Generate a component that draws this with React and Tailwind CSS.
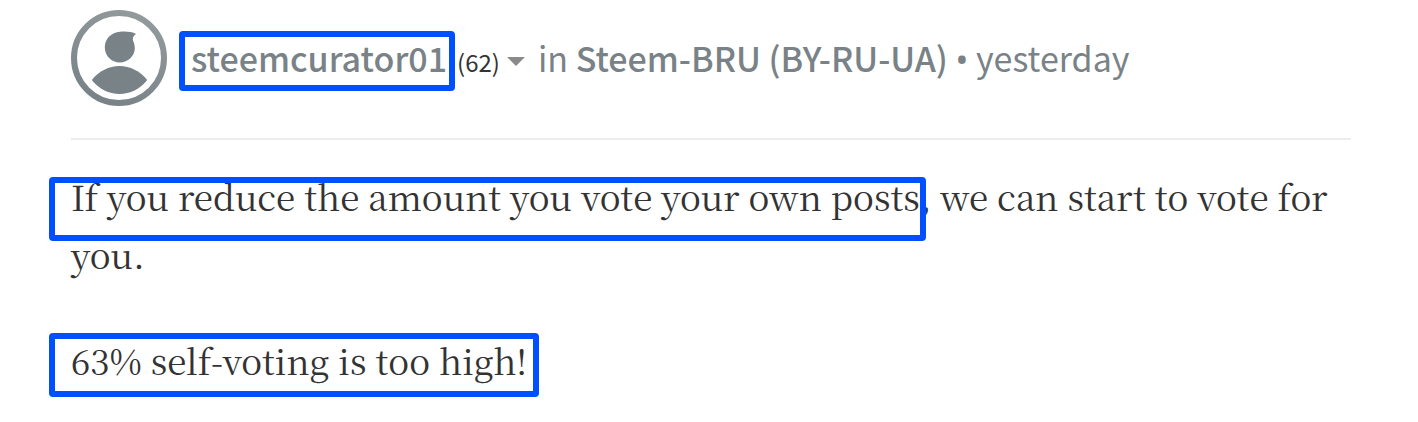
function Avatar() {
  return (
    <svg viewBox="0 0 96 96" className="size-24 shrink-0" role="img" aria-label="steemcurator01 avatar">
      <defs>
        <linearGradient id="ring" x1="0.7" y1="0" x2="0.3" y2="1">
          <stop offset="0" stopColor="#929a9c" />
          <stop offset="1" stopColor="#788287" />
        </linearGradient>
      </defs>
      <circle cx="48" cy="48" r="45" fill="none" stroke="url(#ring)" strokeWidth="6" />
      <path
        fill="#788287"
        d="M65 24 C61 21.600 54 21.300 49 21.800 C40.300 22.300 33.800 29 33.800 37.300 C33.800 46 40.500 52.500 48.800 52.500 C57 52.500 63.800 46 63.800 38 C63.800 35.500 63 33 62.200 31 C61.300 28.500 62 26 65 24 Z"
      />
      <path
        fill="#788287"
        d="M20.800 70 C28 61 38 56 48.500 56 C59 56 69 61 76.200 70 C69 79 59 84 48.500 84 C38 84 28 79 20.800 70 Z"
      />
    </svg>
  );
}

function Marked({ children, frame }) {
  return (
    <span className="relative inline-block">
      {children}
      <span aria-hidden="true" className={`pointer-events-none absolute rounded border-6 border-[#0050ff] ${frame}`} />
    </span>
  );
}

export default function App() {
  return (
    <article className="bg-white pt-[10px] pr-[67px] pb-6 pl-[71px]">
      <header className="flex items-center gap-6 border-b-2 border-[#ececec] pb-8 font-['Noto_Sans_CJK_SC',sans-serif] text-[34px] leading-[60px] text-[#788287]">
        <Avatar />
        <div className="flex items-baseline whitespace-nowrap">
          <a href="#author" className="font-medium">
            <Marked frame="-left-3 -right-2 top-[3px] -bottom-[3px]">steemcurator01</Marked>
          </a>
          <button type="button" className="ml-[10px] flex items-center gap-[7px] text-2xl text-[#333333]" aria-label="Author menu, reputation 62">
            (62)
            <svg viewBox="0 0 18 9" className="h-[9px] w-[18px]" aria-hidden="true">
              <path d="M0 0H18L9 9Z" fill="#8a8a8a" />
            </svg>
          </button>
          <span className="ml-[13px]">
            in <a href="#community" className="font-medium">Steem-BRU (BY-RU-UA)</a>{" "}
            <span className="font-['Noto_Sans',sans-serif]">•</span> <time>yesterday</time>
          </span>
        </div>
      </header>
      <div className="flex flex-col gap-12 pt-[27px] font-['Noto_Serif_CJK_SC','Liberation_Serif',serif] text-[35px] leading-[58px] text-[#333333]">
        <p>
          <Marked frame="-left-[22px] -right-[6px] top-[10px] -bottom-4">
            If you reduce the amount you vote your own posts
          </Marked>
          , we can start to vote for you.
        </p>
        <p>
          <Marked frame="-left-[22px] -right-3 top-[2px] -bottom-2">63% self-voting is too high!</Marked>
        </p>
      </div>
    </article>
  );
}
